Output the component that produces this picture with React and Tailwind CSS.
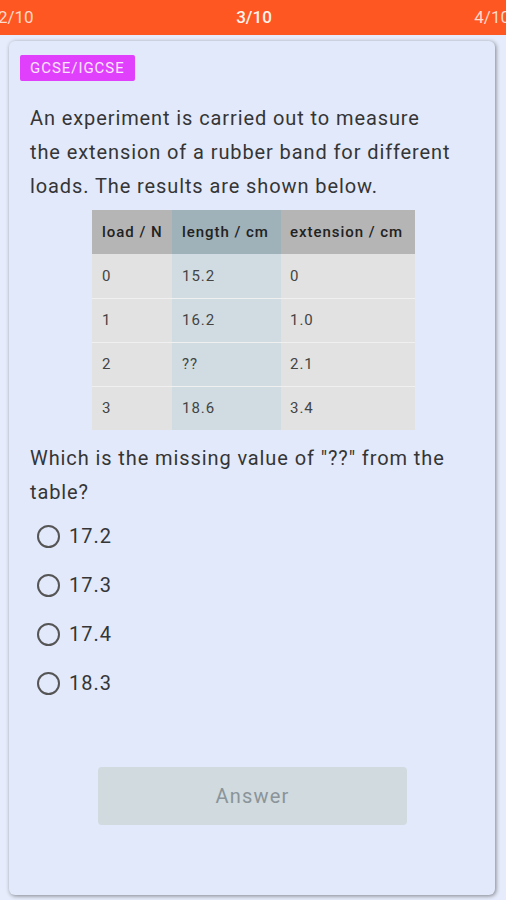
import React, { useState } from 'react';

const rows = [
  ['0', '15.2', '0'],
  ['1', '16.2', '1.0'],
  ['2', '??', '2.1'],
  ['3', '18.6', '3.4'],
];

const options = ['17.2', '17.3', '17.4', '18.3'];

function App() {
  const [selected, setSelected] = useState(null);

  return (
    <div className="w-[506px] h-[900px] overflow-hidden bg-[#e6ecfb] flex flex-col font-['Roboto',sans-serif] tracking-[0.06em]">
      {/* Question pager */}
      <div className="h-[35px] shrink-0 bg-[#ff5722] flex items-center justify-between text-[17px] leading-none tracking-normal">
        <span className="text-[#ffd9c9] -ml-[2px]">2/10</span>
        <span className="text-[#fff3ec] font-medium">3/10</span>
        <span className="text-[#ffd9c9] -mr-[4px]">4/10</span>
      </div>

      <div className="flex-1 pl-[9px] pr-[11px] pt-[6px] pb-[5px]">
        <div className="h-full rounded-[6px] bg-[#e2e9fb] shadow-[1px_1px_4px_rgba(0,0,0,0.45)] flex flex-col pt-[14px] pl-[11px] pr-[14px]">
          <div className="self-start h-[26px] px-[10px] flex items-center bg-[#e040fb] rounded-[2px] text-[#fbe6ff] text-[15px]">
            GCSE/IGCSE
          </div>

          <p className="mt-[20px] pl-[10px] text-[20px] leading-[34px] text-[#353535] tracking-[0.045em]">
            An experiment is carried out to measure<br />
            the extension of a rubber band for different<br />
            loads. The results are shown below.
          </p>

          <div className="mt-[7px] ml-[72px] w-[323px] text-[15px] text-[#444]">
            <div className="flex h-[44px] font-medium text-[#222]">
              <div className="w-[80px] bg-[#b5b5b5] flex items-center pl-[10px]">load / N</div>
              <div className="w-[109px] bg-[#9fb1b9] flex items-center pl-[10px]">length / cm</div>
              <div className="flex-1 bg-[#b5b5b5] flex items-center pl-[9px]">extension / cm</div>
            </div>
            {rows.map((r, i) => (
              <div key={i} className={`flex h-[44px] ${i > 0 ? 'border-t border-[#f0f0f0]' : ''}`}>
                <div className="w-[80px] bg-[#e2e2e2] flex items-center pl-[10px]">{r[0]}</div>
                <div className="w-[109px] bg-[#d0dce1] flex items-center pl-[10px]">{r[1]}</div>
                <div className="flex-1 bg-[#e2e2e2] flex items-center pl-[9px]">{r[2]}</div>
              </div>
            ))}
          </div>

          <p className="mt-[11px] pl-[10px] text-[20px] leading-[34px] text-[#353535] tracking-[0.045em]">
            Which is the missing value of "??" from the<br />
            table?
          </p>

          <div className="mt-[15px] pl-[17px] flex flex-col gap-[25px]">
            {options.map((o, i) => (
              <label key={o} className="flex items-center gap-[9px] h-[24px] cursor-pointer" onClick={() => setSelected(i)}>
                <span className="w-[23px] h-[23px] rounded-full border-2 border-[#555] flex items-center justify-center">
                  {selected === i && <span className="w-[11px] h-[11px] rounded-full bg-[#555]" />}
                </span>
                <span className="text-[20px] text-[#353535]">{o}</span>
              </label>
            ))}
          </div>

          <div className="mt-[72px] flex justify-center pl-[4px]">
            <button disabled className="w-[309px] h-[58px] rounded-[4px] bg-[#d0dadf] text-[#8a9499] text-[20px] tracking-[0.06em]">
              Answer
            </button>
          </div>
        </div>
      </div>
    </div>
  );
}

export default App;
